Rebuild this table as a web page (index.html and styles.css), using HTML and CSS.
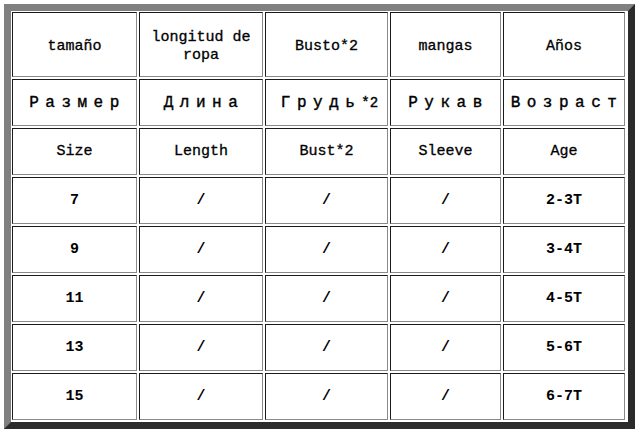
FILE: index.html
```html
<!DOCTYPE html>
<html>
<head>
<meta charset="utf-8">
<link rel="stylesheet" href="styles.css">
</head>
<body>
<div class="frame">
  <div class="grid">
    <div class="cell head">tamaño</div>
    <div class="cell head">longitud de<br>ropa</div>
    <div class="cell head">Busto*2</div>
    <div class="cell head">mangas</div>
    <div class="cell head">Años</div>

    <div class="cell ru">Размер</div>
    <div class="cell ru">Длина</div>
    <div class="cell ru">Грудь<span class="lat">*2</span></div>
    <div class="cell ru">Рукав</div>
    <div class="cell ru">Возраст</div>

    <div class="cell">Size</div>
    <div class="cell">Length</div>
    <div class="cell">Bust*2</div>
    <div class="cell">Sleeve</div>
    <div class="cell">Age</div>

    <div class="cell num">7</div>
    <div class="cell num">/</div>
    <div class="cell num">/</div>
    <div class="cell num">/</div>
    <div class="cell num">2-3T</div>

    <div class="cell num">9</div>
    <div class="cell num">/</div>
    <div class="cell num">/</div>
    <div class="cell num">/</div>
    <div class="cell num">3-4T</div>

    <div class="cell num">11</div>
    <div class="cell num">/</div>
    <div class="cell num">/</div>
    <div class="cell num">/</div>
    <div class="cell num">4-5T</div>

    <div class="cell num">13</div>
    <div class="cell num">/</div>
    <div class="cell num">/</div>
    <div class="cell num">/</div>
    <div class="cell num">5-6T</div>

    <div class="cell num">15</div>
    <div class="cell num">/</div>
    <div class="cell num">/</div>
    <div class="cell num">/</div>
    <div class="cell num">6-7T</div>
  </div>
</div>
</body>
</html>
```

FILE: styles.css
```css
html, body {
  margin: 0;
  padding: 0;
  background: #ffffff;
}
body {
  padding: 4px 0 0 4px;
  font-family: "Liberation Mono", "DejaVu Sans Mono", monospace;
  color: #000;
}
.frame {
  display: inline-block;
  border-style: solid;
  border-width: 7px;
  border-color: #808080 #2b2b2b #2b2b2b #808080;
  padding: 1px 3px 2px 1px;
  background: #fff;
}
.grid {
  display: grid;
  grid-template-columns: 125px 124px 123px 111px 122px;
  grid-template-rows: 65px repeat(7, 47px);
  gap: 2px;
}
.cell {
  box-sizing: border-box;
  border: 1px solid;
  border-color: #1a1a1a #8a8a8a #8a8a8a #1a1a1a;
  display: flex;
  align-items: center;
  justify-content: center;
  text-align: center;
  font-size: 15px;
  line-height: 18px;
  -webkit-text-stroke: 0.3px #000;
}
.head {
  padding-top: 4px;
}
.ru {
  font-size: 16px;
  letter-spacing: 6.5px;
  padding-left: 6px;
  white-space: nowrap;
  -webkit-text-stroke: 0.4px #000;
}
.ru .lat {
  font-size: 14px;
  letter-spacing: 0;
}
.num {
  font-weight: bold;
  -webkit-text-stroke: 0;
}
```
